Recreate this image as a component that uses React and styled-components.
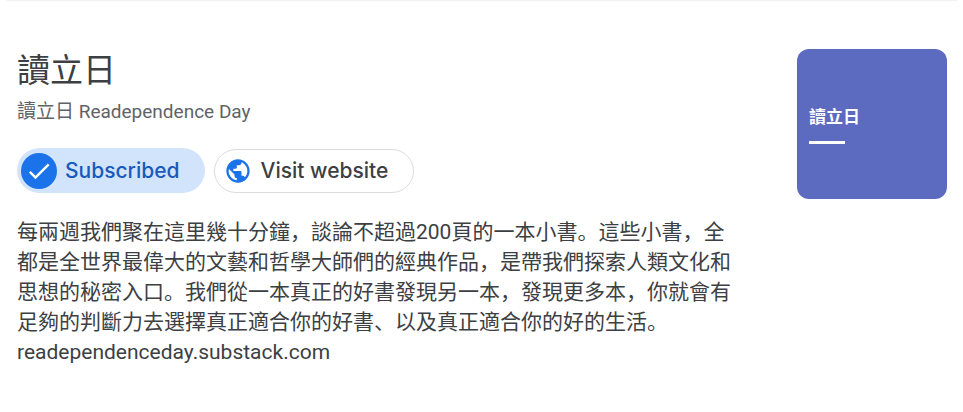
import React from "react";
import styled, { createGlobalStyle, css } from "styled-components";

const GlobalStyle = createGlobalStyle`
  * { box-sizing: border-box; }
  body {
    margin: 0;
    background: #fff;
    color: #3c4043;
    font-family: Roboto, "Noto Sans CJK SC", sans-serif;
  }
`;

const Page = styled.main`
  padding: 0 16px 0 17px;
`;

const Divider = styled.hr`
  margin: 0 -10px;
  border: 0;
  border-top: 1px solid #f1f1f1;
`;

const Header = styled.header`
  display: flex;
  justify-content: space-between;
  gap: 56px;
  padding-top: 48px;
`;

const Info = styled.div`
  flex: 1;
  max-width: 724px;
`;

const Title = styled.h1`
  margin: 0;
  padding-top: 2px;
  font-size: 33px;
  font-weight: 400;
  line-height: 40px;
`;

const Author = styled.div`
  margin-top: 8px;
  color: #5f6368;
  font-size: 19px;
  line-height: 26px;
`;

const Actions = styled.div`
  display: flex;
  align-items: flex-end;
  gap: 9px;
  margin-top: 23px;
`;

const pill = css`
  display: inline-flex;
  align-items: center;
  border-radius: 24px;
  font-family: Inter, sans-serif;
  font-size: 21px;
  font-weight: 500;
  line-height: 28px;
  text-decoration: none;
  white-space: nowrap;
  cursor: pointer;
`;

const SubscribeButton = styled.button`
  ${pill}
  gap: 8px;
  height: 45px;
  padding: 0 25px 0 4px;
  border: 0;
  background: #d2e3fc;
  color: #185abc;
`;

const CheckBadge = styled.span`
  display: grid;
  place-items: center;
  width: 36px;
  height: 36px;
  border-radius: 50%;
  background: #1a73e8;
`;

const WebsiteLink = styled.a`
  ${pill}
  gap: 9px;
  height: 44px;
  padding: 0 25px 0 9px;
  border: 1px solid #dadce0;
  color: #3c4043;
`;

const Description = styled.p`
  margin: 24px 0 0;
  font-size: 21px;
  line-height: 30px;
`;

const Cover = styled.div`
  flex: none;
  width: 150px;
  height: 150px;
  padding: 56px 12px;
  border-radius: 12px;
  background: #5c6bc0;
  color: #fff;
  font-size: 17px;
  font-weight: 700;
  line-height: 24px;
`;

const CoverRule = styled.div`
  width: 36px;
  height: 3px;
  margin-top: 12px;
  background: #fff;
`;

export default function App() {
  return (
    <>
      <GlobalStyle />
      <Page lang="zh">
        <Divider />
        <Header>
          <Info>
            <Title>讀立日</Title>
            <Author>讀立日 Readependence Day</Author>
            <Actions>
              <SubscribeButton type="button">
                <CheckBadge>
                  <svg width="28" height="28" viewBox="0 0 24 24" fill="#fff" aria-hidden="true">
                    <path d="M9 16.17 4.83 12l-1.42 1.41L9 19 21 7l-1.41-1.41z" />
                  </svg>
                </CheckBadge>
                Subscribed
              </SubscribeButton>
              <WebsiteLink href="https://readependenceday.substack.com">
                <svg width="28" height="28" viewBox="0 0 24 24" fill="#1a73e8" aria-hidden="true">
                  <path d="M12 2C6.48 2 2 6.48 2 12s4.48 10 10 10 10-4.48 10-10S17.52 2 12 2zM4 12c0-.61.08-1.21.21-1.78L8.99 15v1c0 1.1.9 2 2 2v1.93C7.06 19.43 4 16.07 4 12zm13.89 5.4c-.26-.81-1-1.4-1.9-1.4h-1v-3c0-.55-.45-1-1-1h-6v-2h2c.55 0 1-.45 1-1V7h2c1.1 0 2-.9 2-2v-.41C17.92 5.77 20 8.65 20 12c0 2.08-.81 3.98-2.11 5.4z" />
                </svg>
                Visit website
              </WebsiteLink>
            </Actions>
            <Description>
              每兩週我們聚在這里幾十分鐘，談論不超過200頁的一本小書。這些小書，全都是全世界最偉大的文藝和哲學大師們的經典作品，是帶我們探索人類文化和思想的秘密入口。我們從一本真正的好書發現另一本，發現更多本，你就會有足夠的判斷力去選擇真正適合你的好書、以及真正適合你的好的生活。
              <br />
              readependenceday.substack.com
            </Description>
          </Info>
          <Cover>
            讀立日
            <CoverRule />
          </Cover>
        </Header>
      </Page>
    </>
  );
}
